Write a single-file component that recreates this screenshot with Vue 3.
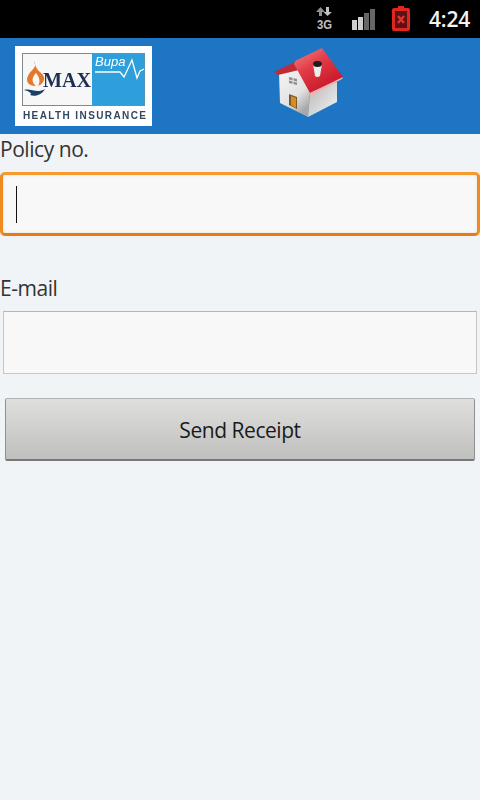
<script setup>
const bars = [
  { h: 10, on: true },
  { h: 13, on: true },
  { h: 17, on: false },
  { h: 21, on: false }
]
</script>

<template>
  <div class="screen">
    <header class="status">
      <svg class="net" width="18" height="24" viewBox="0 0 18 24">
        <path d="M5.500 0 L10 5 H7 V9 H4 V5 H1 Z" fill="#8f8f8f" />
        <path d="M12.500 9 L8.500 5 H11 V0 H14 V5 H17 Z" fill="#c2c2c2" />
        <text x="2" y="21.500" class="net-text" textLength="15" lengthAdjust="spacingAndGlyphs">3G</text>
      </svg>
      <div class="signal">
        <span
          v-for="(b, i) in bars"
          :key="i"
          class="bar"
          :class="{ on: b.on }"
          :style="{ height: b.h + 'px' }"
        ></span>
      </div>
      <svg class="battery" width="18" height="25" viewBox="0 0 18 25">
        <path d="M6 0 H12 V2 H16 Q18 2 18 4 V23 Q18 25 16 25 H2 Q0 25 0 23 V4 Q0 2 2 2 H6 Z" fill="#e0261e" />
        <rect x="3" y="5" width="12" height="17" fill="#5a1212" />
        <path d="M6 10 L12 17 M12 10 L6 17" stroke="#e2332b" stroke-width="2.400" />
      </svg>
      <span class="time">4:24</span>
    </header>

    <div class="topbar">
      <svg class="logo" width="137" height="80" viewBox="0 0 137 80">
        <rect width="137" height="80" fill="#fff" />
        <rect x="7.500" y="7.500" width="122" height="52" fill="#f6f7f6" stroke="#7d8a92" />
        <rect x="77" y="8" width="52.500" height="51" fill="#2f9fdb" />
        <path d="M19 15 C23 21 16 24 14 28 C10 34 12 40 21 40 C16 36 17 31 21 27 C24 31 26 35 23 40 C30 37 31 31 26 27 C22 24 20 20 19 15 Z" fill="#e5792b" />
        <path d="M9 44 C16 42 22 48 30 43 C27 49 20 51 15 49 C18 48 14 45 9 44 Z" fill="#1d3c66" />
        <text x="28" y="41" class="max" textLength="48" lengthAdjust="spacingAndGlyphs">MAX</text>
        <text x="80" y="20" class="bupa">Bupa</text>
        <path d="M80 26 H105 L109 31 L117 14 L122 32 L125 25 L129 23" fill="none" stroke="#fff" stroke-width="1.300" />
        <text x="8" y="73" class="health" textLength="123">HEALTH INSURANCE</text>
      </svg>

      <svg class="home" width="72" height="74" viewBox="0 0 72 74">
        <defs>
          <linearGradient id="wallL" x1="0" y1="0" x2="0.600" y2="1">
            <stop offset="0" stop-color="#f7f7f7" />
            <stop offset="0.700" stop-color="#e2e2e2" />
            <stop offset="1" stop-color="#a8a8a8" />
          </linearGradient>
          <linearGradient id="wallR" x1="0" y1="0" x2="1" y2="1">
            <stop offset="0" stop-color="#b5b5b5" />
            <stop offset="1" stop-color="#f5f5f5" />
          </linearGradient>
          <linearGradient id="roof" x1="0" y1="0" x2="0.700" y2="1">
            <stop offset="0" stop-color="#f0868a" />
            <stop offset="0.450" stop-color="#e23a46" />
            <stop offset="1" stop-color="#c31224" />
          </linearGradient>
        </defs>
        <path d="M6 27 L22 18 L37 46 L35 71 L7 57 Z" fill="url(#wallL)" />
        <path d="M37 46 L64 36 L64 56 L35 71 Z" fill="url(#wallR)" />
        <path d="M1 26 L22 16 L26 24 L5 29 Z" fill="#c22a35" />
        <path d="M21 18 Q22 14 26 13 L49 2 L70 31 L37 47 Z" fill="url(#roof)" />
        <path d="M37 47 L70 31 L69 33 L38 50 Z" fill="#f3b0b3" />
        <path d="M16 31 L24 33 L24 39 L16 37 Z" fill="#8e8e8e" />
        <path d="M16 34 L24 36 M20 32 V38" stroke="#e9e9e9" stroke-width="1" />
        <path d="M16 48 L24 51 L24 63 L16 59 Z" fill="#7b5a2a" />
        <path d="M18 50 L23 52 L23 62 L18 59 Z" fill="#dc8c1d" />
        <path d="M40 18 H49 L47 30 Q44 32 42 30 Z" fill="#ececec" />
        <ellipse cx="44.500" cy="18" rx="4.500" ry="3" fill="#1d1d1d" />
      </svg>
    </div>

    <main class="form">
      <label class="label first">Policy no.</label>
      <div class="input focused"><span class="caret"></span></div>
      <label class="label second">E-mail</label>
      <div class="input plain"></div>
      <div class="button">Send Receipt</div>
    </main>
  </div>
</template>

<style>
body { margin: 0; }
</style>

<style scoped>
.screen {
  width: 480px;
  height: 800px;
  background: #f0f4f7;
  font-family: "Open Sans", "Noto Sans", sans-serif;
  overflow: hidden;
}
.status {
  height: 38px;
  background: #000;
  display: flex;
  align-items: center;
  justify-content: flex-end;
  padding-right: 10px;
  box-sizing: border-box;
}
.net { margin-right: 19px; margin-top: -1px; }
.net-text {
  font-family: "Liberation Sans", sans-serif;
  font-size: 13px;
  font-weight: 700;
  fill: #c2c2c2;
}
.signal {
  display: flex;
  align-items: flex-end;
  gap: 1px;
  height: 21px;
  margin-right: 17px;
  margin-top: 1px;
}
.bar { width: 5px; background: #666; }
.bar.on { background: #cfcfcf; }
.battery { margin-right: 19px; margin-top: -2px; }
.time {
  color: #f4f4f4;
  font-size: 21px;
  font-weight: 600;
  letter-spacing: -0.200px;
  line-height: 38px;
  font-family: "Open Sans", sans-serif;
}
.topbar {
  height: 96px;
  background: #1e75c3;
  display: flex;
  align-items: flex-start;
  padding: 8px 0 0 15px;
  box-sizing: border-box;
}
.logo { display: block; filter: blur(0.3px); }
.max {
  font-family: "Liberation Serif", serif;
  font-size: 22px;
  font-weight: 700;
  fill: #1d2f55;
}
.bupa {
  font-family: "Liberation Sans", sans-serif;
  font-size: 13px;
  font-style: italic;
  fill: #fff;
}
.health {
  font-family: "Liberation Sans", sans-serif;
  font-size: 10px;
  font-weight: 700;
  fill: #33475f;
}
.home { margin-left: 121px; display: block; filter: blur(0.4px); }
.form { display: flex; flex-direction: column; }
.label {
  display: block;
  font-size: 21px;
  letter-spacing: -0.450px;
  line-height: 30px;
  color: #333;
}
.first { margin-top: 0; }
.second { margin-top: 37px; }
.input { box-sizing: border-box; background: #f7f8f7; }
.focused {
  height: 64px;
  margin-top: 8px;
  border: 3px solid #f08a1f;
  border-top-color: #f59a2e;
  border-bottom-color: #ea7a10;
  border-radius: 5px;
  padding: 11px 0 0 13px;
  box-shadow: inset 0 0 3px #e3e3e3;
}
.caret { display: block; width: 1px; height: 37px; background: #111; }
.plain {
  height: 63px;
  margin: 8px 3px 0;
  border: 1px solid #c6c8c8;
  border-top-color: #b4b6b6;
}
.button {
  box-sizing: border-box;
  height: 63px;
  margin: 24px 5px 0;
  padding-top: 2px;
  background: linear-gradient(#dfe0de, #bfc0be);
  border: 1px solid #b2b3b1;
  border-bottom: 2px solid #77787a;
  border-left-color: #8f908f;
  border-right-color: #8f908f;
  border-radius: 2px;
  display: flex;
  align-items: center;
  justify-content: center;
  font-size: 21px;
  letter-spacing: -0.450px;
  color: #1a1a1a;
}
</style>
